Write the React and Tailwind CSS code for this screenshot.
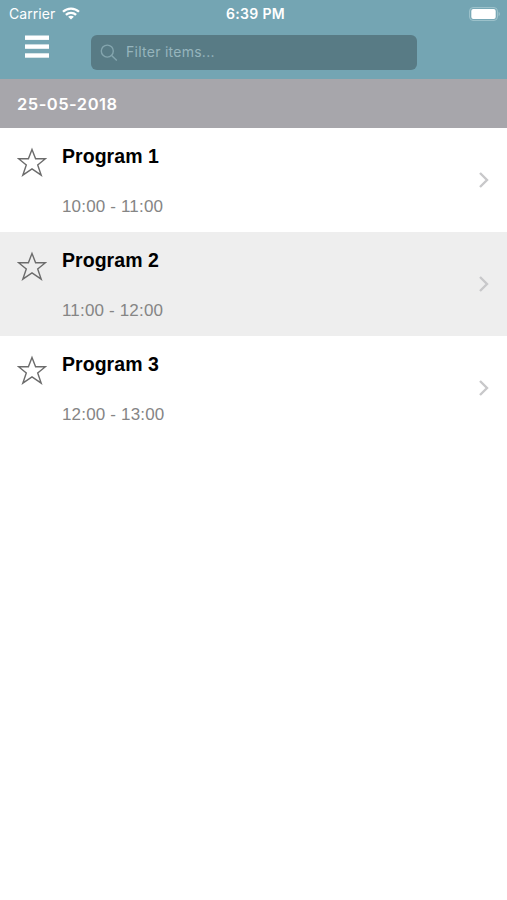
import { useState } from 'react'

const programs = [
    { id: 1, title: 'Program 1', time: '10:00 - 11:00' },
    { id: 2, title: 'Program 2', time: '11:00 - 12:00' },
    { id: 3, title: 'Program 3', time: '12:00 - 13:00' },
];

const MenuIcon = () => (
    <svg width="24" height="24" viewBox="0 0 24 24" fill="white">
        <rect y="0.5" width="24" height="4.4" />
        <rect y="9.4" width="24" height="4.4" />
        <rect y="18.3" width="24" height="4.4" />
    </svg>
);

const WifiIcon = () => (
    <svg width="18" height="13" viewBox="0 0 18 13" fill="none" stroke="white" strokeWidth="2.3">
        <path d="M1 4.8C5.4 0.5 12.6 0.5 17 4.8" />
        <path d="M3.9 7.9C6.8 5.1 11.2 5.1 14.1 7.9" />
        <path d="M9 12.6L6.1 9.8C7.7 8.3 10.3 8.3 11.9 9.8Z" fill="white" stroke="none" />
    </svg>
);

const BatteryIcon = () => (
    <svg width="32" height="14" viewBox="0 0 32 14" fill="none">
        <rect x="0.6" y="0.6" width="27.8" height="12.8" rx="3.4" stroke="#a0c4cd" strokeWidth="1" />
        <rect x="2.3" y="2.1" width="24.4" height="9.8" rx="2" fill="white" />
        <path d="M29.6 4.8C31.3 5.6 31.3 8.4 29.6 9.2Z" fill="#a0c4cd" />
    </svg>
);

const SearchIcon = () => (
    <svg width="18" height="18" viewBox="0 0 18 18" fill="none" stroke="#84a5ae" strokeWidth="1.4">
        <circle cx="7.3" cy="7.1" r="6" />
        <path d="M11.6 11.4L16.8 16.6" />
    </svg>
);

const StarIcon = () => (
    <svg width="30" height="30" viewBox="0 0 30 30" fill="none" stroke="#6c6c6c" strokeWidth="1.4">
        <path d="M15 2.4L18.6 11.7H28.4L20.7 18L24.2 28.2L15 21.9L5.8 28.2L9.3 18L1.6 11.7H11.4Z" />
    </svg>
);

const ChevronIcon = () => (
    <svg width="10" height="16" viewBox="0 0 10 16" fill="none" stroke="#c8c8ca" strokeWidth="2.4">
        <path d="M1 1L8 8L1 15" />
    </svg>
);

const StatusBar = () => (
    <div className="grid grid-cols-3 items-center h-[27px] pl-[9px] pr-[6px] text-white">
        <div className="flex items-center gap-[7px]">
            <span className="text-[14px] tracking-[0.05px]">Carrier</span>
            <WifiIcon />
        </div>
        <span className="pl-px text-center text-[14px] font-semibold tracking-[0.35px] whitespace-nowrap">6:39 PM</span>
        <div className="flex justify-end">
            <BatteryIcon />
        </div>
    </div>
);

const ProgramRow = ({ program }) => (
    <li className="flex h-[104px] pl-[17px] pr-[18px] even:bg-[#eeeeee]">
        <button className="w-[45px] shrink-0 self-start pt-[19px]">
            <StarIcon />
        </button>
        <div className="grow pt-4">
            <h2 className="text-[19.5px] leading-6 font-bold tracking-[0.05px] text-black">{program.title}</h2>
            <p className="mt-[27px] text-[17px] leading-6 tracking-[0.17px] text-[#858585]">{program.time}</p>
        </div>
        <div className="self-center">
            <ChevronIcon />
        </div>
    </li>
);

const App = () => {
    const [filter, setFilter] = useState('');

    const visible = programs.filter((p) => p.title.toLowerCase().includes(filter.toLowerCase()));

    return (
        <div className="min-h-screen bg-white font-['Inter',sans-serif]">
            <header className="h-[79px] bg-[#74a5b3]">
                <StatusBar />
                <div className="flex items-start pl-[25px] pt-2">
                    <button className="w-6 mr-[42px]">
                        <MenuIcon />
                    </button>
                    <label className="flex items-center gap-[8px] w-[326px] h-[35px] pl-[9px] rounded-[6px] bg-[#587b85]">
                        <SearchIcon />
                        <input
                            value={filter}
                            onChange={(e) => setFilter(e.target.value)}
                            placeholder="Filter items..."
                            className="grow pb-[2px] bg-transparent text-[14px] tracking-[0.26px] text-white placeholder:text-[#96b5bd] outline-none"
                        />
                    </label>
                </div>
            </header>
            <div className="flex items-center h-[49px] pl-[17px] pt-px bg-[#a7a6ab] text-white text-[16.5px] font-semibold tracking-[0.5px]">
                25-05-2018
            </div>
            <ul className="font-['Liberation_Sans',Arial,sans-serif]">
                {visible.map((program) => (
                    <ProgramRow key={program.id} program={program} />
                ))}
            </ul>
        </div>
    );
}

export default App
